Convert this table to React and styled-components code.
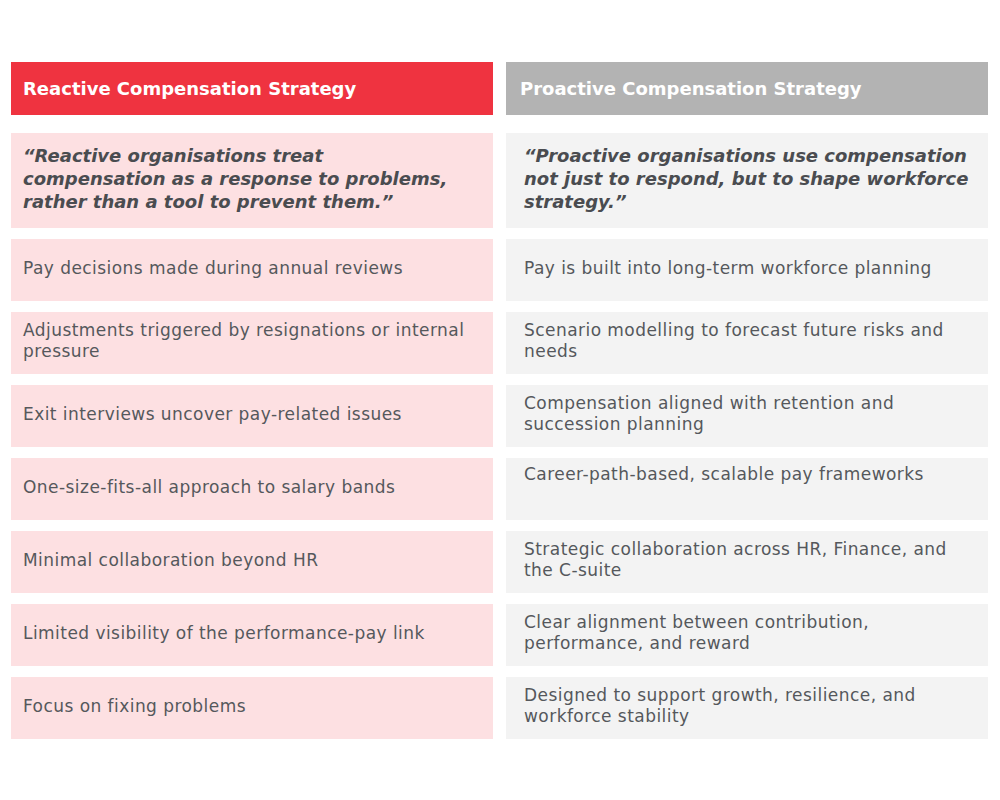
import React from "react";
import styled, { createGlobalStyle } from "styled-components";

// each row: reactive lines, proactive lines, and whether the proactive text sits at the top
const rows = [
  [["Pay decisions made during annual reviews"], ["Pay is built into long-term workforce planning"]],
  [["Adjustments triggered by resignations or internal", "pressure"], ["Scenario modelling to forecast future risks and", "needs"]],
  [["Exit interviews uncover pay-related issues"], ["Compensation aligned with retention and", "succession planning"]],
  [["One-size-fits-all approach to salary bands"], ["Career-path-based, scalable pay frameworks"], true],
  [["Minimal collaboration beyond HR"], ["Strategic collaboration across HR, Finance, and", "the C-suite"]],
  [["Limited visibility of the performance-pay link"], ["Clear alignment between contribution,", "performance, and reward"]],
  [["Focus on fixing problems"], ["Designed to support growth, resilience, and", "workforce stability"]],
];

const Lines = ({ lines }) =>
  lines.map((line, i) => (
    <React.Fragment key={i}>
      {i > 0 && <br />}
      {line}
    </React.Fragment>
  ));

const GlobalStyle = createGlobalStyle`
  body {
    margin: 0;
    background: #ffffff;
    font-family: "DejaVu Sans", "Liberation Sans", sans-serif;
  }
`;

const App = () => {
  return (
    <>
      <GlobalStyle />
      <Page>
        <Table>
          <Header $side="left">Reactive Compensation Strategy</Header>
          <Header $side="right">Proactive Compensation Strategy</Header>

          <Quote $side="left">
            <div>
              “Reactive organisations treat<br />
              compensation as a response to problems,<br />
              rather than a tool to prevent them.”
            </div>
          </Quote>
          <Quote $side="right">
            <div>
              “Proactive organisations use compensation<br />
              not just to respond, but to shape workforce<br />
              strategy.”
            </div>
          </Quote>

          {rows.map(([left, right, top], i) => (
            <React.Fragment key={i}>
              <Cell $side="left">
                <div><Lines lines={left} /></div>
              </Cell>
              <Cell $side="right" $top={top}>
                <div><Lines lines={right} /></div>
              </Cell>
            </React.Fragment>
          ))}
        </Table>
      </Page>
    </>
  );
};

export default App;

// Styled Components
const Page = styled.div`
  width: 1000px;
  height: 800px;
  padding: 62px 12px 0 11px;
  box-sizing: border-box;
`;

const Table = styled.div`
  display: grid;
  grid-template-columns: 482px 482px;
  column-gap: 13px;
  row-gap: 11px;
`;

const Header = styled.div`
  height: 53px;
  display: flex;
  align-items: center;
  margin-bottom: 7px;
  padding-left: ${(p) => (p.$side === "left" ? "12px" : "14px")};
  background: ${(p) => (p.$side === "left" ? "#ef3340" : "#b3b3b3")};
  color: #ffffff;
  font-weight: 700;
  font-size: 18px;
`;

const Quote = styled.div`
  height: 95px;
  box-sizing: border-box;
  padding: 0 12px 4px ${(p) => (p.$side === "left" ? "12px" : "18px")};
  display: flex;
  align-items: center;
  background: ${(p) => (p.$side === "left" ? "#fde0e2" : "#f3f3f3")};
  color: #4a4c50;
  font-style: italic;
  font-weight: 700;
  font-size: 18px;
  line-height: 23px;
  white-space: nowrap;
`;

const Cell = styled.div`
  height: 62px;
  box-sizing: border-box;
  padding: ${(p) => (p.$top ? "6px" : "0")} 12px 4px ${(p) => (p.$side === "left" ? "12px" : "18px")};
  display: flex;
  align-items: ${(p) => (p.$top ? "flex-start" : "center")};
  background: ${(p) => (p.$side === "left" ? "#fde0e2" : "#f3f3f3")};
  color: #55585c;
  font-size: 17px;
  letter-spacing: 0.45px;
  line-height: 21px;
  white-space: nowrap;
`;
